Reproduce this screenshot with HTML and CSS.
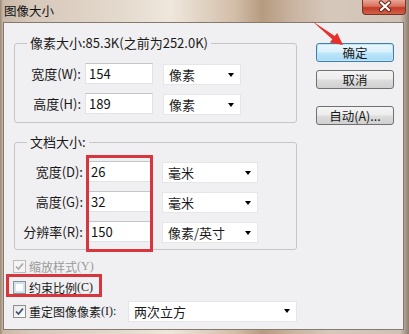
FILE: index.html
```html
<!DOCTYPE html>
<html>
<head>
<meta charset="utf-8">
<title>图像大小</title>
<link rel="stylesheet" href="styles.css">
</head>
<body>
<div class="window">
  <div class="titlebar">
    <span class="title">图像大小</span>
    <span class="close">
      <svg width="44" height="15" viewBox="0 0 44 15">
        <path d="M18 3.5 L26 11 M26 3.5 L18 11" stroke="#6b2417" stroke-width="4.2" stroke-linecap="round"/>
        <path d="M18 3.5 L26 11 M26 3.5 L18 11" stroke="#ffffff" stroke-width="2.2" stroke-linecap="round"/>
      </svg>
    </span>
  </div>
  <div class="client">
    <div class="main">
      <fieldset class="group g1">
        <legend>像素大小:85.3K(之前为252.0K)</legend>
        <div class="rows">
          <div class="row"><label class="lbl">宽度(W):</label><input class="field" value="154"><div class="select"><span>像素</span><i class="arrow"></i></div></div>
          <div class="row"><label class="lbl">高度(H):</label><input class="field" value="189"><div class="select"><span>像素</span><i class="arrow"></i></div></div>
        </div>
      </fieldset>
      <fieldset class="group g2">
        <legend>文档大小:</legend>
        <div class="rows">
          <div class="row"><label class="lbl">宽度(D):</label><input class="field" value="26"><div class="select"><span>毫米</span><i class="arrow"></i></div></div>
          <div class="row"><label class="lbl">高度(G):</label><input class="field" value="32"><div class="select"><span>毫米</span><i class="arrow"></i></div></div>
          <div class="row"><label class="lbl">分辨率(R):</label><input class="field" value="150"><div class="select"><span>像素/英寸</span><i class="arrow"></i></div></div>
          <div class="mark mark-fields"></div>
        </div>
      </fieldset>
      <div class="checks">
        <div class="check disabled">
          <span class="box"><svg width="11" height="11" viewBox="0 0 11 11"><path d="M2 5.5 L4.5 8 L9 2.5" fill="none" stroke="#a8a8a8" stroke-width="1.6"/></svg></span>缩放样式<span class="key">(Y)</span>
        </div>
        <div class="check">
          <span class="box empty"></span>约束比例<span class="key">(C)</span>
          <div class="mark mark-check"></div>
        </div>
        <div class="check resample">
          <span class="box"><svg width="11" height="11" viewBox="0 0 11 11"><path d="M2 5.5 L4.5 8 L9 2.5" fill="none" stroke="#3d4f6e" stroke-width="1.7"/></svg></span>重定图像像素<span class="key">(I):</span>
          <div class="select wide"><span>两次立方</span><i class="arrow"></i></div>
        </div>
      </div>
    </div>
    <div class="buttons">
      <div class="btn primary">确定</div>
      <div class="btn">取消</div>
      <div class="btn auto">自动(A)...</div>
    </div>
  </div>
  <svg class="pointer" width="409" height="334" viewBox="0 0 409 334">
    <polygon points="312,21 334.7,36.1 337.2,33 343,45 329.8,42.4 332.3,39.3" fill="#e8302b"/>
  </svg>
</div>
</body>
</html>
```

FILE: styles.css
```css
* { box-sizing: border-box; }
body { margin: 0; font-family: "Noto Sans CJK SC", "Microsoft YaHei", sans-serif; font-size: 12px; color: #1a1a1a; }

.window { position: relative; width: 409px; height: 334px; overflow: hidden; display: flex; flex-direction: column;
  background: linear-gradient(90deg, #9a8776 0px, #c9b8a7 3px, #d6c8ba 30px, #e4d9cd 120px, #efe7dd 170px, #d2bea9 235px, #b69b80 262px, #c7b29e 290px, #d6c9bc 330px, #cfc1b3 400px, #8e7e6f 409px); }

.titlebar { height: 22px; display: flex; justify-content: space-between; align-items: flex-start; }
.title { padding-left: 4px; line-height: 22px; font-size: 12.5px; color: #111; }
.close { width: 44px; height: 15px; margin-right: 3px; border: 1px solid #7b3325; border-top: none; border-radius: 0 0 4px 4px;
  background: linear-gradient(#e9a596, #d9705c 45%, #c13d26 55%, #d2604a); }
.close svg { display: block; margin-top: -1px; }

.client { flex: 1; margin: 0 5px 4px 3px; padding: 12px 0 0 10px; display: flex; background: #f0eff1; border: 1px solid #857a6e; }
.main { width: 283px; }

.group { margin: 0; padding: 12px 0 7px 0; border: 1px solid #c6c6c6; border-radius: 3px; min-width: 0; }
.group legend { margin-left: 12px; padding: 0 3px; line-height: 16px; font-size: 13px; color: #1a1a1a; }
.g2 { margin-top: 11px; padding-top: 11px; padding-bottom: 6px; }

.rows { position: relative; display: flex; flex-direction: column; gap: 8px; }
.row { display: flex; align-items: flex-start; height: 22px; }
.lbl { width: 70px; padding-right: 4px; text-align: right; line-height: 21px; font-size: 13px; }
.g2 .lbl { width: 72px; }

.field { width: 68px; height: 21px; margin: 0 10px 0 0; padding: 0 3px; border: 1px solid #e2e3e6; border-top-color: #c3c5c9;
  background: #fff; font-family: inherit; font-size: 13px; color: #111; outline: none; }
.g2 .field { width: 65px; }

.select { width: 78px; height: 21px; margin-top: 1px; padding: 0 6px 0 5px; display: flex; justify-content: space-between; align-items: center;
  background: #fff; border: 1px solid #e6e6e8; font-size: 13px; }
.g2 .select { width: 96px; }
.arrow { width: 0; height: 0; border-left: 3.5px solid transparent; border-right: 3.5px solid transparent; border-top: 4px solid #000; }

.mark { position: absolute; border: 3px solid #d8353c; pointer-events: none; }
.mark-fields { left: 71px; top: -6px; width: 67px; height: 97px; }
.mark-check { left: -7px; top: -2px; width: 96px; height: 23px; }

.checks { margin-top: 6px; margin-left: -1px; }
.check { position: relative; display: flex; align-items: center; height: 20px; font-size: 12px; }
.check .key { font-family: "Liberation Serif", serif; font-size: 12px; }
.check:nth-child(2) { height: 22px; }
.check.resample { height: 26px; }
.check.disabled { color: #9a9a9a; }
.box { width: 13px; height: 13px; margin-right: 3px; border: 1px solid #8e8f8f; background: linear-gradient(135deg, #e6e6e6, #ffffff); display: flex; align-items: center; justify-content: center; }
.disabled .box { border-color: #bcbcbc; background: #f4f4f4; }
.box.empty { background: #fff; box-shadow: inset 0 0 0 2px #cfe3f3; }
.select.wide { width: 169px; margin: 0 0 0 auto; }

.buttons { width: 78px; margin-left: 19px; padding-top: 8px; }
.btn { height: 19px; margin-bottom: 8px; border: 1px solid #707070; border-radius: 3px; text-align: center; line-height: 17px; font-size: 12.5px;
  background: linear-gradient(#f4f4f4, #ececec 48%, #dddddd 52%, #d0d0d0); }
.btn.primary { border-color: #3c7fb1; background: linear-gradient(#eaf6fd, #d9f0fc 48%, #bee6fd 52%, #a7d9f5); box-shadow: inset 0 0 0 1px #c3e5f6; }
.btn.auto { margin-top: 17px; }

.pointer { position: absolute; left: 0; top: 0; pointer-events: none; }
```
